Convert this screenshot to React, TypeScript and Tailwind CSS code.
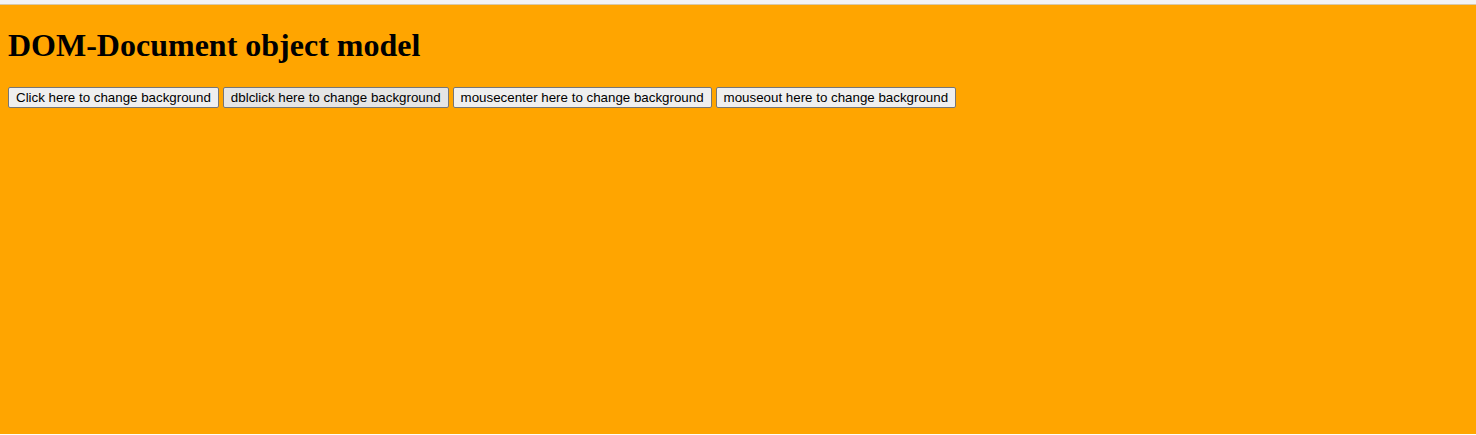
export default function App() {
  const buttons = [
    "Click here to change background",
    "dblclick here to change background",
    "mousecenter here to change background",
    "mouseout here to change background",
  ];

  return (
    <div className="min-h-[435px] bg-white">
      {/* strip above the page */}
      <div className="h-[5px] bg-[#f3f3f3] border-b border-[#d8c9a8]" />
      <main className="min-h-[429px] bg-[#ffa500] px-2 pt-[22px] text-black">
        <h1 className="text-[32px] font-bold leading-[37px] font-['Liberation_Serif',serif] mb-[23px]">
          DOM-Document object model
        </h1>
        <div className="flex gap-[4px] font-['Liberation_Sans',Arial,sans-serif]">
          {buttons.map((label, i) => (
            <button
              key={label}
              className={
                "h-[21px] px-[7px] text-[13.33px] leading-[17px] border border-[#767676] rounded-[2px] text-black " +
                (i === 1 ? "bg-[#e5e5e5]" : "bg-[#efefef]")
              }
            >
              {label}
            </button>
          ))}
        </div>
      </main>
    </div>
  );
}
